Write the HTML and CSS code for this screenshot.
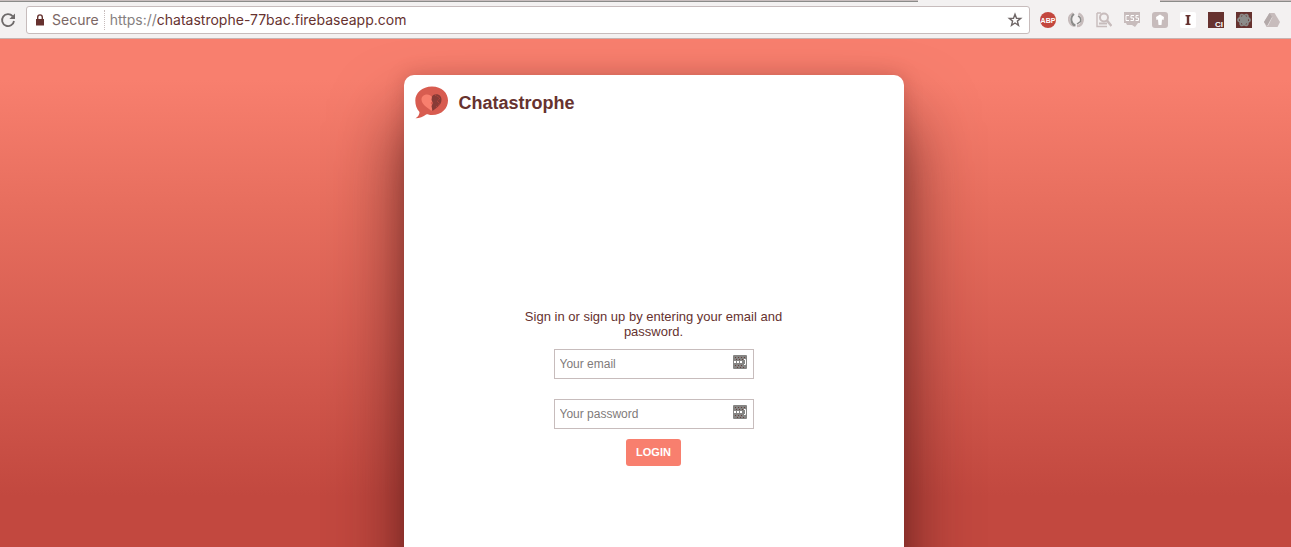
FILE: index.html
```html
<!DOCTYPE html>
<html lang="en">
<head>
<meta charset="utf-8">
<title>Chatastrophe</title>
<link rel="stylesheet" href="styles.css">
</head>
<body>
<div class="tabstrip"><span class="tabs-left"></span><span class="tab-active"></span><span class="tabs-right"></span></div>
<nav class="toolbar" aria-label="Browser">
  <button class="icon-button reload" aria-label="Reload">
    <svg width="16" height="16" viewBox="0 0 16 16"><path d="M12.6 4.2A6 6 0 1 0 14 9" fill="none" stroke="#6e6a6a" stroke-width="1.8"/><path d="M15 1.5v5.6H9.4z" fill="#6e6a6a"/></svg>
  </button>
  <div class="omnibox">
    <svg class="lock" width="8" height="12" viewBox="0 0 8 12"><path d="M0 5h8v6.5H0z" fill="#66322f"/><path d="M1.7 5.5V3.2a2.3 2.3 0 0 1 4.6 0v2.3" fill="none" stroke="#66322f" stroke-width="1.4"/></svg>
    <span class="secure">Secure</span>
    <span class="address"><span class="scheme">https://</span>chatastrophe-77bac.firebaseapp.com</span>
    <button class="icon-button" aria-label="Bookmark this page">
      <svg width="16" height="16" viewBox="0 0 16 16"><path d="M8 2.200l1.500 4 4.200.2-3.300 2.700 1.100 4.200L8 11l-3.500 2.300 1.100-4.200-3.300-2.700 4.200-.2z" fill="#fff" stroke="#6e6666" stroke-width="1.400"/></svg>
    </button>
  </div>
  <div class="extensions">
    <button class="icon-button" aria-label="Ad blocker"><svg width="16" height="16" viewBox="0 0 16 16"><circle cx="8" cy="8" r="8" fill="#c3473e"/><text x="8" y="11" class="abp">ABP</text></svg></button>
    <button class="icon-button" aria-label="Laurel"><svg width="16" height="16" viewBox="0 0 16 16" fill="none"><path d="M5 1Q0 4 1 8.500T6.500 14" stroke="#c7bcbc" stroke-width="2"/><path d="M6 2Q2.500 5 3.500 9T7.500 13.500" stroke="#8b8b89" stroke-width="2"/><path d="M10.500 1.500Q15.500 4 14.500 9T9 14" stroke="#c7bcbc" stroke-width="2.500"/><path d="M10 4q3.500 1.500 2.500 5.500L9 12" stroke="#8b8b89" stroke-width="1.500"/></svg></button>
    <button class="icon-button" aria-label="Page search"><svg width="16" height="16" viewBox="0 0 16 16" fill="none" stroke="#c7bcbc"><path d="M1 1v13.500h10M1 1h4" stroke-width="1.400"/><circle cx="8" cy="5.500" r="4" stroke-width="2"/><path d="M11 8.500l4.500 5.500" stroke-width="2.500"/><path d="M3 11.500h8" stroke-width="2"/></svg></button>
    <button class="icon-button" aria-label="CSS viewer"><svg width="16" height="16" viewBox="0 0 16 16"><path d="M0 0h16v11h-2l-3 4-3-2H3l-1-2H0z" fill="#c7bcbc"/><path d="M5 3.500H2v5h3M10 3.500H7V6h2.500v2.500H6.500M14.500 3.500H12V6h2.500v2.500H11.500" fill="none" stroke="#fff"/></svg></button>
    <button class="icon-button" aria-label="Upload"><svg width="16" height="16" viewBox="0 0 16 16"><rect width="16" height="16" rx="3" fill="#c7bcbc"/><path d="M8 2.500l4 2.500-.5 3-1.500-.5L9.500 13h-3L6 7.500 4.500 8 4 5z" fill="#fff"/></svg></button>
    <button class="icon-button" aria-label="Instapaper"><svg width="16" height="16" viewBox="0 0 16 16"><rect width="16" height="16" rx="2" fill="#fff"/><path d="M5.500 3h5v1.200l-1.300.3v7l1.300.3V13h-5v-1.200l1.300-.3v-7l-1.300-.3z" fill="#66322f"/></svg></button>
    <button class="icon-button" aria-label="CI"><svg width="16" height="16" viewBox="0 0 16 16"><path d="M0 0h16v16H0z" fill="#66322f"/><text x="11" y="15" class="ci">CI</text></svg></button>
    <button class="icon-button" aria-label="React tools"><svg width="16" height="16" viewBox="0 0 16 16"><path d="M0 0h16v16H0z" fill="#66322f"/><g fill="none" stroke="#8b8b89" stroke-width="1.800"><ellipse cx="8" cy="8" rx="6" ry="2.500"/><ellipse cx="8" cy="8" rx="6" ry="2.500" transform="rotate(60 8 8)"/><ellipse cx="8" cy="8" rx="6" ry="2.500" transform="rotate(120 8 8)"/></g><circle cx="8" cy="8" r="4" fill="#8b8b89"/></svg></button>
    <button class="icon-button" aria-label="Drive"><svg width="16" height="16" viewBox="0 0 16 16"><path d="M5.500 1h5L16 10l-2.500 5h-11L0 10z" fill="#c7bcbc"/><path d="M8 5l-4.500 9" fill="none" stroke="#e9e4e4"/><path d="M5.500 1L8 5 3 14 0 10z" fill="#b3a9a9"/></svg></button>
  </div>
</nav>
<div class="page">
  <main class="card">
    <header class="card-header">
      <svg class="logo" width="34" height="34" viewBox="0 0 34 34"><path d="M17 .5C27 .5 33 7 33 14.500S27 29 17 29c-2 0-4-.2-5.500-.8Q6 32.500 .5 32.300q4-2.500 4-6.300C1.500 23 .3 19 .3 14.500.3 7 7 .5 17 .5z" fill="#d85c50"/><path d="M17 11c-2-4-10.500-3.500-10.500 2.500 0 5 5.500 7.500 10 11.500l1.500-5-2.500-3 3-3z" fill="#f87f6e"/><path d="M17 10.500c2.500-4 9.500-2.500 9.500 3 0 5.500-4.500 8-9 11.500l-1-5 1.500-3-1.500-3z" fill="#873b36"/><path d="M20 9l5 3-3 3 3 3-4 3" fill="none" stroke="#c3473e" stroke-dasharray="1 1"/></svg>
      <h1 class="title">Chatastrophe</h1>
    </header>
    <form class="login">
      <p class="prompt">Sign in or sign up by entering your email and password.</p>
      <div class="field">
        <input class="input" type="email" placeholder="Your email" aria-label="Your email">
        <svg class="autofill" width="14" height="14" viewBox="0 0 14 14"><rect width="14" height="14" rx="1" fill="#858583"/><path d="M2 2.500h10M3 4.500h7M2 10.500h9M4 12.500h7" stroke="#66403d" stroke-dasharray="1 2"/><path d="M1 7h9" stroke="#fff" stroke-width="2" stroke-dasharray="2 1"/><path d="M11 4.500h1.500v5H11" fill="none" stroke="#fff"/></svg>
      </div>
      <div class="field">
        <input class="input" type="password" placeholder="Your password" aria-label="Your password">
        <svg class="autofill" width="14" height="14" viewBox="0 0 14 14"><rect width="14" height="14" rx="1" fill="#858583"/><path d="M2 2.500h10M3 4.500h7M2 10.500h9M4 12.500h7" stroke="#66403d" stroke-dasharray="1 2"/><path d="M1 7h9" stroke="#fff" stroke-width="2" stroke-dasharray="2 1"/><path d="M11 4.500h1.500v5H11" fill="none" stroke="#fff"/></svg>
      </div>
      <button class="submit" type="submit">LOGIN</button>
    </form>
  </main>
</div>
</body>
</html>
```
FILE: styles.css
```css
* { box-sizing: border-box; }
body {
  margin: 0;
  height: 100vh;
  overflow: hidden;
  display: flex;
  flex-direction: column;
  font-family: "Liberation Sans", Arial, sans-serif;
  color: #66322f;
}
.tabstrip { display: flex; height: 2px; background: #f3f1f1; }
.tabs-left, .tabs-right { background: #c9bfbf; border-bottom: 1px solid #8b8b89; }
.tabs-left { flex: 918; }
.tab-active { flex: 242; }
.tabs-right { flex: 131; }
.toolbar {
  display: flex;
  align-items: center;
  gap: 10px;
  height: 37px;
  padding: 0 11px 1px 0;
  background: #f3f1f1;
  border-bottom: 1px solid #c7b3b0;
}
.icon-button {
  display: flex;
  padding: 0;
  border: 0;
  background: none;
}
.omnibox {
  flex: 1;
  display: flex;
  align-items: center;
  height: 28px;
  padding: 0 6px 0 9px;
  border: 1px solid #c7bcbc;
  border-radius: 3px;
  background: #fff;
  font: 14px/20px Inter, Roboto, sans-serif;
}
.secure {
  margin-left: 8px;
  padding-right: 5px;
  border-right: 1px dotted #c7bcbc;
  color: #7b6765;
}
.address { flex: 1; margin-left: 5px; }
.scheme { color: #858080; }
.extensions { display: flex; gap: 12px; }
.abp { font: bold 7px "Liberation Sans", sans-serif; fill: #fff; text-anchor: middle; }
.ci { font: bold 8px "Liberation Sans", sans-serif; fill: #fff; text-anchor: middle; }
.page {
  flex: 1;
  display: flex;
  justify-content: center;
  padding: 36px 0 0 16px;
  background: linear-gradient(#f87f6e 8%, #e76e5e 33%, #d65c50 61%, #c2483f 90%);
}
.card {
  width: 500px;
  margin-bottom: -120px;
  border-radius: 10px;
  background: #fff;
  box-shadow: 0 45px 70px rgba(70, 20, 20, .75), 0 0 20px rgba(90, 20, 20, .2);
}
.card-header { display: flex; align-items: center; gap: 10px; padding: 11px; }
.title { margin: 0; font-size: 18px; line-height: 34px; }
.login {
  display: flex;
  flex-direction: column;
  align-items: center;
  padding-top: 178px;
}
.prompt {
  max-width: 300px;
  margin: 0 0 10px;
  font-size: 13px;
  line-height: 15px;
  text-align: center;
}
.field { position: relative; width: 200px; margin-bottom: 20px; }
.input {
  display: block;
  width: 100%;
  height: 30px;
  padding: 0 28px 0 5px;
  border: 1px solid #c7bcbc;
  font: 12px "Liberation Sans", Arial, sans-serif;
}
.input::placeholder { color: #7f7b7a; }
.autofill { position: absolute; top: 6px; right: 7px; }
.field + .submit { margin-top: -10px; }
.submit {
  padding: 7px 10px;
  border: 0;
  border-radius: 3px;
  background: #f87f6e;
  color: #fff;
  font: bold 11px/13px "Liberation Sans", Arial, sans-serif;
}
```
